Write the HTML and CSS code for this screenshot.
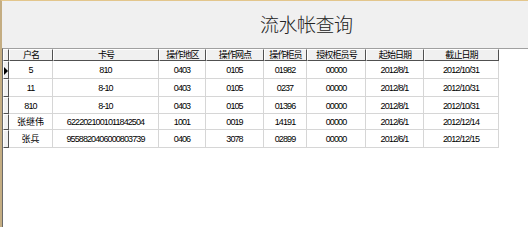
FILE: index.html
```html
<!DOCTYPE html>
<html lang="zh-CN">
  <head>
    <meta charset="UTF-8" />
    <title>流水帐查询</title>
    <link rel="stylesheet" href="styles.css">
  </head>
  <body>
    <div class="window">
      <!-- title panel -->
      <div class="top-panel">
        <h1 class="title">流水帐查询</h1>
      </div>

      <!-- data grid -->
      <div class="grid">
        <table class="grid-table">
          <colgroup>
            <col class="c-rowhead" />
            <col class="c-name" />
            <col class="c-card" />
            <col class="c-area" />
            <col class="c-branch" />
            <col class="c-teller" />
            <col class="c-auth" />
            <col class="c-start" />
            <col class="c-end" />
          </colgroup>
          <thead>
            <tr>
              <th class="corner"></th>
              <th>户名</th>
              <th>卡号</th>
              <th>操作地区</th>
              <th>操作网点</th>
              <th>操作柜员</th>
              <th>授权柜员号</th>
              <th>起始日期</th>
              <th>截止日期</th>
            </tr>
          </thead>
          <tbody>
            <tr class="r1">
              <td class="rowhead current"><span class="arrow"></span></td>
              <td>5</td>
              <td>810</td>
              <td>0403</td>
              <td>0105</td>
              <td>01982</td>
              <td>00000</td>
              <td>2012/8/1</td>
              <td>2012/10/31</td>
            </tr>
            <tr class="r2">
              <td class="rowhead"></td>
              <td>11</td>
              <td>8-10</td>
              <td>0403</td>
              <td>0105</td>
              <td>0237</td>
              <td>00000</td>
              <td>2012/8/1</td>
              <td>2012/10/31</td>
            </tr>
            <tr class="r3">
              <td class="rowhead"></td>
              <td>810</td>
              <td>8-10</td>
              <td>0403</td>
              <td>0105</td>
              <td>01396</td>
              <td>00000</td>
              <td>2012/8/1</td>
              <td>2012/10/31</td>
            </tr>
            <tr class="r4">
              <td class="rowhead"></td>
              <td class="cn">张继伟</td>
              <td>6222021001011842504</td>
              <td>1001</td>
              <td>0019</td>
              <td>14191</td>
              <td>00000</td>
              <td>2012/6/1</td>
              <td>2012/12/14</td>
            </tr>
            <tr class="r5">
              <td class="rowhead"></td>
              <td class="cn">张兵</td>
              <td>9558820406000803739</td>
              <td>0406</td>
              <td>3078</td>
              <td>02899</td>
              <td>00000</td>
              <td>2012/6/1</td>
              <td>2012/12/15</td>
            </tr>
          </tbody>
        </table>
      </div>
    </div>
  </body>
</html>
```

FILE: styles.css
```css
* {
  margin: 0;
  padding: 0;
  box-sizing: border-box;
}

html,
body {
  height: 100%;
}

body {
  font-family: "Liberation Sans", "Noto Sans CJK SC", sans-serif;
  background: #ffffff;
  color: #000;
}

.window {
  height: 100%;
  display: flex;
  flex-direction: column;
  border-top: 1px solid #e3c68c;
  border-left: 2px solid #c4ad82;
}

/* title panel */
.top-panel {
  height: 47px;
  background: #f0f0f0;
  padding-left: 258px;
  padding-top: 10px;
}

.title {
  font-family: "Noto Sans CJK SC", sans-serif;
  font-weight: 300;
  font-size: 19px;
  line-height: 26px;
  color: #222;
  letter-spacing: -0.5px;
}

/* grid */
.grid {
  flex: 1;
  background: #fff;
  border-left: 1px solid #6a6a6a;
  border-top: 1px solid #a0a0a0;
}

.grid-table {
  border-collapse: separate;
  border-spacing: 0;
  table-layout: fixed;
  width: 496px;
  font-size: 9px;
  letter-spacing: -0.9px;
}

.c-rowhead { width: 6px; }
.c-name { width: 44px; }
.c-card { width: 106px; }
.c-area { width: 47px; }
.c-branch { width: 58px; }
.c-teller { width: 43px; }
.c-auth { width: 59px; }
.c-start { width: 58px; }
.c-end { width: 75px; }

.grid-table th {
  height: 12px;
  background: #f0f0f0;
  font-weight: normal;
  font-size: 9px;
  line-height: 10px;
  color: #000;
  border-top: 1px solid #fff;
  border-left: 1px solid #fff;
  border-right: 1px solid #505050;
  border-bottom: 1px solid #505050;
  text-align: center;
  vertical-align: top;
  white-space: nowrap;
  overflow: hidden;
}

.grid-table td {
  background: #fff;
  color: #000;
  line-height: 10px;
  padding-top: 4px;
  border-right: 1px solid #d6d6d6;
  border-bottom: 1px solid #d6d6d6;
  text-align: center;
  vertical-align: top;
  white-space: nowrap;
  overflow: hidden;
}

.grid-table td.cn {
  letter-spacing: 0;
}

.r1 td { height: 18px; }
.r2 td { height: 18px; }
.r3 td { height: 17px; }
.r4 td { height: 16px; padding-top: 3px; }
.r5 td { height: 18px; }

.grid-table td.rowhead {
  background: #f0f0f0;
  border-top: 1px solid #fff;
  border-left: 1px solid #fff;
  border-right: 1px solid #505050;
  border-bottom: 1px solid #505050;
  padding: 0;
  vertical-align: middle;
  position: relative;
}

.arrow {
  position: absolute;
  left: 0;
  top: 5px;
  width: 0;
  height: 0;
  border-top: 4px solid transparent;
  border-bottom: 4px solid transparent;
  border-left: 4px solid #000;
}
```
